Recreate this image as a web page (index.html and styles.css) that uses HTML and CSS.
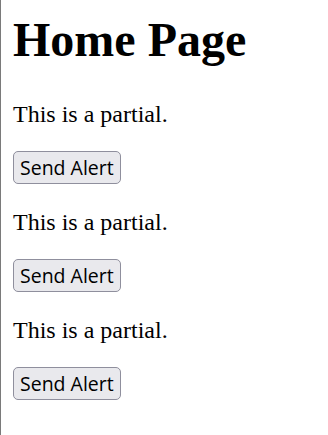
FILE: index.html
```html
<!DOCTYPE html>
<html>
<head>
<meta charset="utf-8">
<title>Home Page</title>
<link rel="stylesheet" href="styles.css">
</head>
<body class="page">
<h1 class="title">Home Page</h1>
<div class="partial">
<p class="partial-text">This is a partial.</p>
<button class="alert-btn" type="button">Send Alert</button>
</div>
<div class="partial">
<p class="partial-text">This is a partial.</p>
<button class="alert-btn" type="button">Send Alert</button>
</div>
<div class="partial">
<p class="partial-text">This is a partial.</p>
<button class="alert-btn" type="button">Send Alert</button>
</div>
</body>
</html>
```
FILE: styles.css
```css
html {
  margin: 0;
  padding: 0;
  background: #fff;
}
.page {
  margin: 0;
  padding: 12px 12px 0 12px;
  min-height: 435px;
  box-sizing: border-box;
  border-left: 1px solid #7a7a7a;
  font-family: "Liberation Serif", "Times New Roman", serif;
  font-size: 24px;
  color: #000;
}
.title {
  font-size: 48px;
  font-weight: bold;
  margin: 0 0 34px 0;
  line-height: normal;
}
.partial-text {
  margin: 24px 0 23px 0;
  line-height: normal;
}
.alert-btn {
  font-family: "Open Sans", "Noto Sans", sans-serif;
  font-size: 19.5px;
  color: #000;
  background: #e9e9ed;
  border: 1px solid #8f8f9d;
  border-radius: 5px;
  padding: 2px 6px;
  height: 33px;
  line-height: 1;
  vertical-align: top;
  margin-bottom: 1px;
}
```
